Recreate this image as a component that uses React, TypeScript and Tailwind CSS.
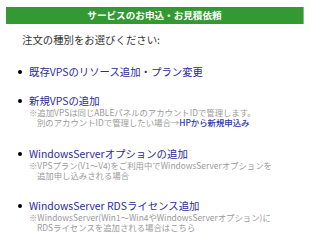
const font = { fontFamily: '"Noto Sans CJK JP", "Noto Sans", sans-serif' };

type Item = {
  title: string;
  notes?: React.ReactNode[];
};

const items: Item[] = [
  { title: "既存VPSのリソース追加・プラン変更" },
  {
    title: "新規VPSの追加",
    notes: [
      "※追加VPSは同じABLEパネルのアカウントIDで管理します。",
      <>
        別のアカウントIDで管理したい場合→
        <a href="#" className="text-[#2a35b0] font-medium">HPから新規申込み</a>
      </>,
    ],
  },
  {
    title: "WindowsServerオプションの追加",
    notes: [
      "※VPSプラン(V1～V4)をご利用中でWindowsServerオプションを",
      "追加申し込みされる場合",
    ],
  },
  {
    title: "WindowsServer RDSライセンス追加",
    notes: [
      "※WindowsServer(Win1～Win4やWindowsServerオプション)に",
      "RDSライセンスを追加される場合はこちら",
    ],
  },
];

const gaps = ["", "mt-[17.5px]", "mt-[21px]", "mt-[20px]"];

export default function App() {
  return (
    <div className="w-[310px] h-[247px] bg-white overflow-hidden pt-[7px]" style={font}>
      <div className="mx-[6px] h-[17px] bg-[#339933] border-r border-[#7cc47c] flex items-center justify-center">
        <span className="text-white text-[9.6px] font-bold leading-none">サービスのお申込・お見積依頼</span>
      </div>
      <p className="mt-[9px] pl-[22px] text-[10.4px] leading-[14px] text-[#333]">注文の種別をお選びください:</p>
      <ul className="mt-[18.5px]">
        {items.map((it, i) => (
          <li key={i} className={`relative pl-[29px] ${gaps[i]}`}>
            <span className="absolute left-[18px] top-[4px] w-[4px] h-[4px] rounded-full bg-black" />
            <a href="#" className="block text-[10.4px] leading-[12px] text-[#2b2b9c] whitespace-nowrap">
              {it.title}
            </a>
            {it.notes?.map((n, j) => (
              <div
                key={j}
                className={`text-[8.4px] leading-[10px] text-[#9a9a9a] whitespace-nowrap ${j > 0 ? "pl-[8px]" : ""}`}
              >
                {n}
              </div>
            ))}
          </li>
        ))}
      </ul>
    </div>
  );
}
